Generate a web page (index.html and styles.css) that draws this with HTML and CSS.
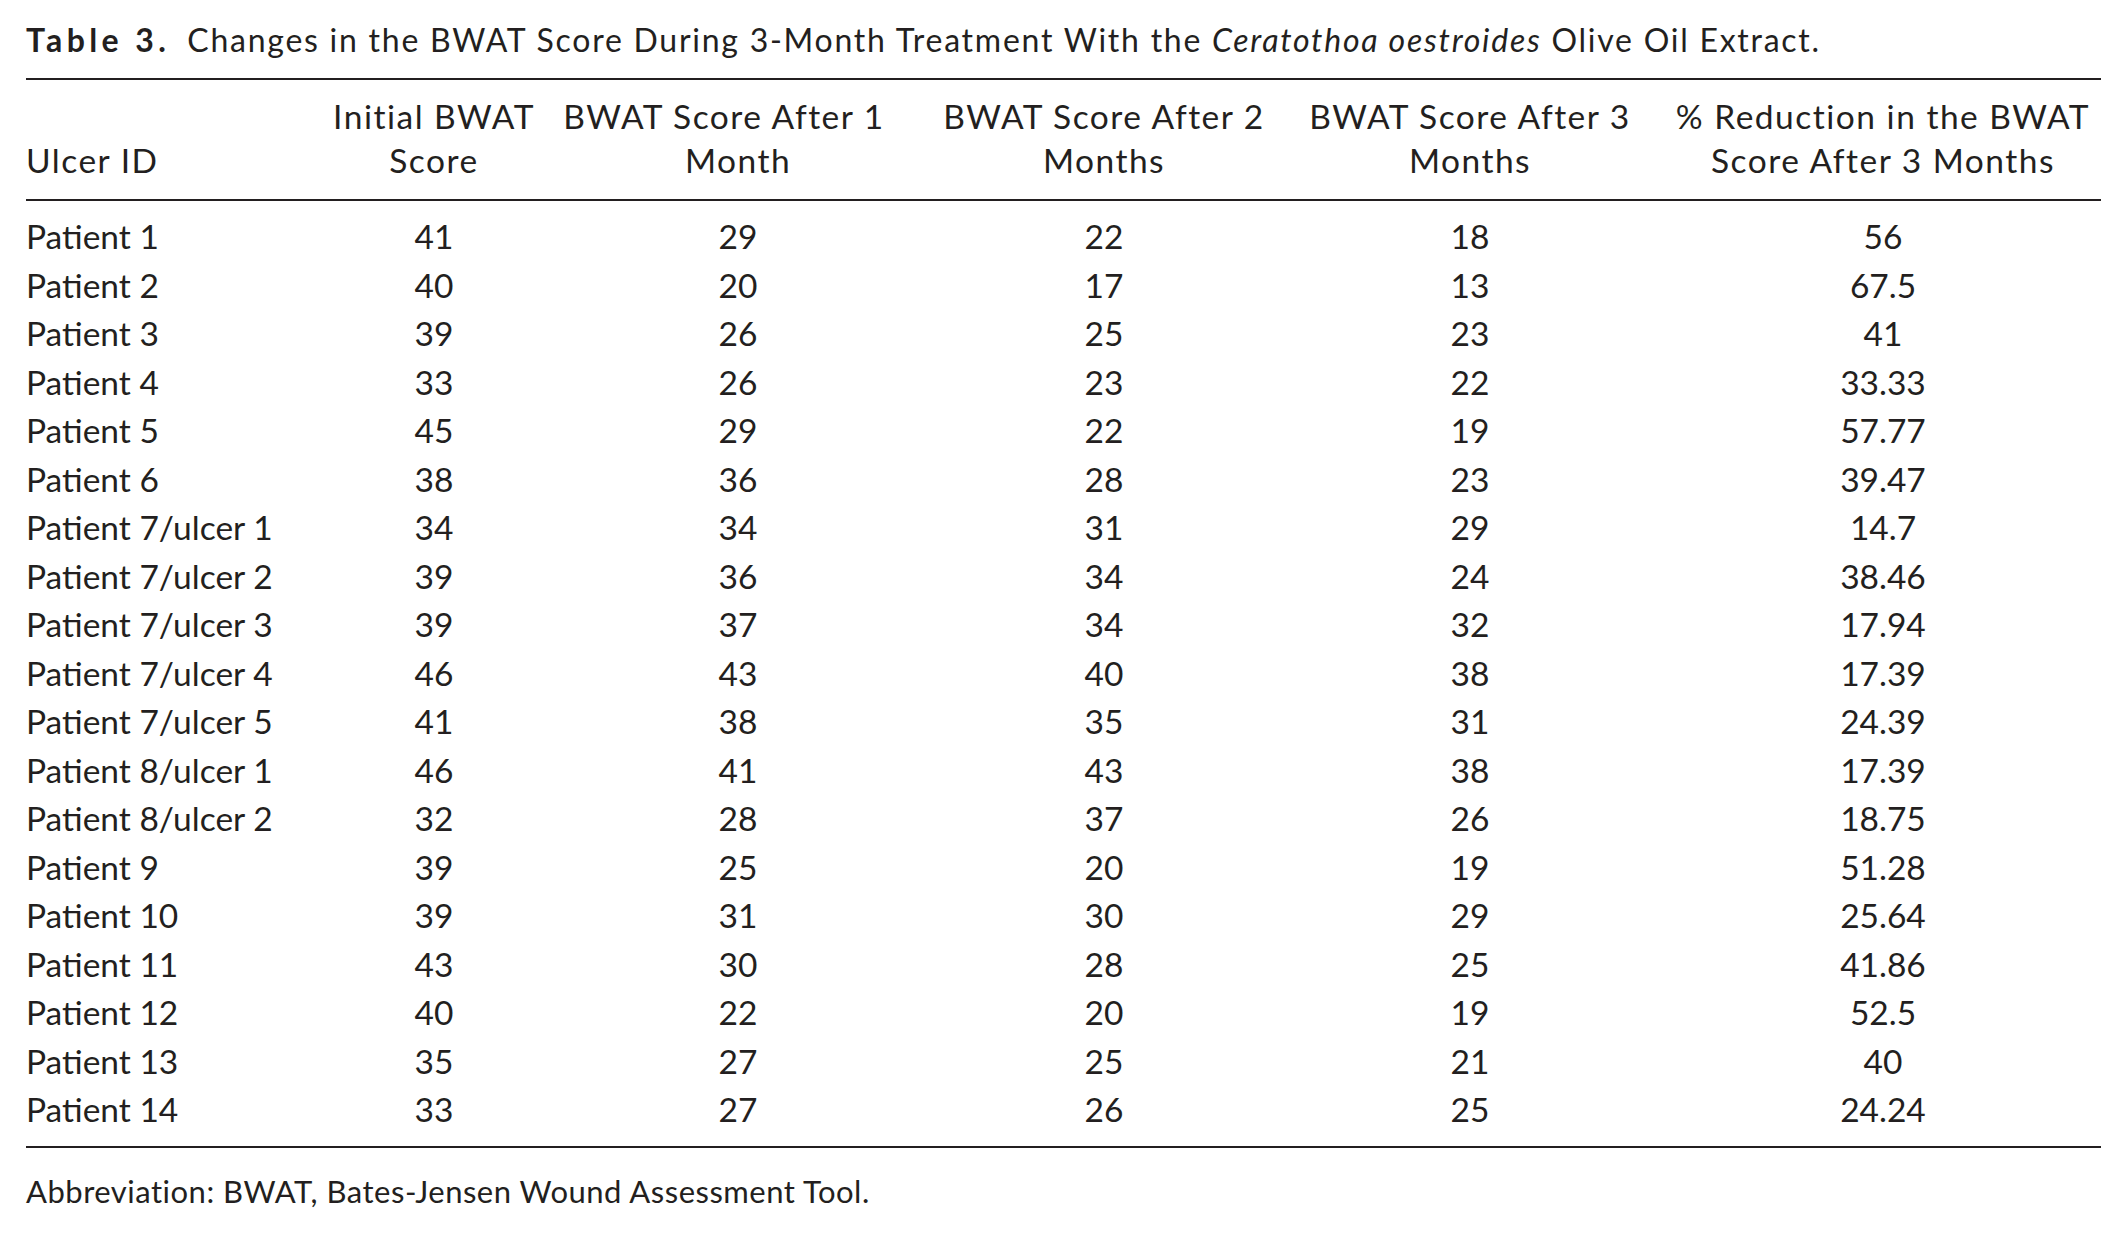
FILE: index.html
```html
<!DOCTYPE html>
<html lang="en">
<head>
<meta charset="utf-8">
<title>Table 3</title>
<link rel="stylesheet" href="styles.css">
</head>
<body>
<div class="page">
  <p class="caption"><b class="label">Table 3.</b>Changes in the BWAT Score During 3-Month Treatment With the <i>Ceratothoa oestroides</i> Olive Oil Extract.</p>
  <table class="data">
    <colgroup>
      <col class="c1"><col class="c2"><col class="c3"><col class="c4"><col class="c5"><col class="c6">
    </colgroup>
    <thead>
      <tr>
        <th class="id"><br>Ulcer ID</th>
        <th>Initial BWAT<br>Score</th>
        <th><span class="lead">BWAT Score After 1</span><br>Month</th>
        <th>BWAT Score After 2<br>Months</th>
        <th>BWAT Score After 3<br>Months</th>
        <th>% Reduction in the BWAT<br>Score After 3 Months</th>
      </tr>
    </thead>
    <tbody>
      <tr><td class="id">Patient 1</td><td>41</td><td>29</td><td>22</td><td>18</td><td>56</td></tr>
      <tr><td class="id">Patient 2</td><td>40</td><td>20</td><td>17</td><td>13</td><td>67.5</td></tr>
      <tr><td class="id">Patient 3</td><td>39</td><td>26</td><td>25</td><td>23</td><td>41</td></tr>
      <tr><td class="id">Patient 4</td><td>33</td><td>26</td><td>23</td><td>22</td><td>33.33</td></tr>
      <tr><td class="id">Patient 5</td><td>45</td><td>29</td><td>22</td><td>19</td><td>57.77</td></tr>
      <tr><td class="id">Patient 6</td><td>38</td><td>36</td><td>28</td><td>23</td><td>39.47</td></tr>
      <tr><td class="id">Patient 7/ulcer 1</td><td>34</td><td>34</td><td>31</td><td>29</td><td>14.7</td></tr>
      <tr><td class="id">Patient 7/ulcer 2</td><td>39</td><td>36</td><td>34</td><td>24</td><td>38.46</td></tr>
      <tr><td class="id">Patient 7/ulcer 3</td><td>39</td><td>37</td><td>34</td><td>32</td><td>17.94</td></tr>
      <tr><td class="id">Patient 7/ulcer 4</td><td>46</td><td>43</td><td>40</td><td>38</td><td>17.39</td></tr>
      <tr><td class="id">Patient 7/ulcer 5</td><td>41</td><td>38</td><td>35</td><td>31</td><td>24.39</td></tr>
      <tr><td class="id">Patient 8/ulcer 1</td><td>46</td><td>41</td><td>43</td><td>38</td><td>17.39</td></tr>
      <tr><td class="id">Patient 8/ulcer 2</td><td>32</td><td>28</td><td>37</td><td>26</td><td>18.75</td></tr>
      <tr><td class="id">Patient 9</td><td>39</td><td>25</td><td>20</td><td>19</td><td>51.28</td></tr>
      <tr><td class="id">Patient 10</td><td>39</td><td>31</td><td>30</td><td>29</td><td>25.64</td></tr>
      <tr><td class="id">Patient 11</td><td>43</td><td>30</td><td>28</td><td>25</td><td>41.86</td></tr>
      <tr><td class="id">Patient 12</td><td>40</td><td>22</td><td>20</td><td>19</td><td>52.5</td></tr>
      <tr><td class="id">Patient 13</td><td>35</td><td>27</td><td>25</td><td>21</td><td>40</td></tr>
      <tr><td class="id">Patient 14</td><td>33</td><td>27</td><td>26</td><td>25</td><td>24.24</td></tr>
    </tbody>
  </table>
  <p class="note">Abbreviation: BWAT, Bates-Jensen Wound Assessment Tool.</p>
</div>
</body>
</html>
```

FILE: styles.css
```css
html, body {
  margin: 0;
  padding: 0;
  background: #ffffff;
}

.page {
  width: 2075px;
  padding: 22px 0 0 26px;
  color: #231f20;
  font-family: Lato, "Noto Sans", sans-serif;
}

.caption {
  margin: 0;
  font-size: 32px;
  line-height: 36px;
  letter-spacing: 1.75px;
  white-space: nowrap;
}

.caption .label {
  font-weight: 700;
  letter-spacing: 4.4px;
  margin-right: 17px;
}

.data {
  margin-top: 20px;
  width: 2075px;
  table-layout: fixed;
  border-collapse: collapse;
  border-top: 2px solid #231f20;
  border-bottom: 2px solid #231f20;
  font-size: 33.5px;
}

.c1 { width: 299px; }
.c2 { width: 218px; }
.c3 { width: 390px; }
.c4 { width: 342px; }
.c5 { width: 390px; }
.c6 { width: 436px; }

.data th {
  font-weight: 400;
  line-height: 44px;
  letter-spacing: 1.5px;
  padding: 14px 0 17px;
  text-align: center;
  white-space: nowrap;
  border-bottom: 2px solid #231f20;
}

.data th .lead {
  margin-right: 28px;
}

.data td {
  padding: 0;
  line-height: 48.5px;
  text-align: center;
  white-space: nowrap;
}

.data .id {
  text-align: left;
}

.data tbody tr:first-child td {
  padding-top: 11px;
}

.data tbody tr:last-child td {
  padding-bottom: 12.5px;
}

.note {
  margin: 25px 0 0;
  font-size: 31px;
  line-height: 36px;
  letter-spacing: 0.5px;
}
```
